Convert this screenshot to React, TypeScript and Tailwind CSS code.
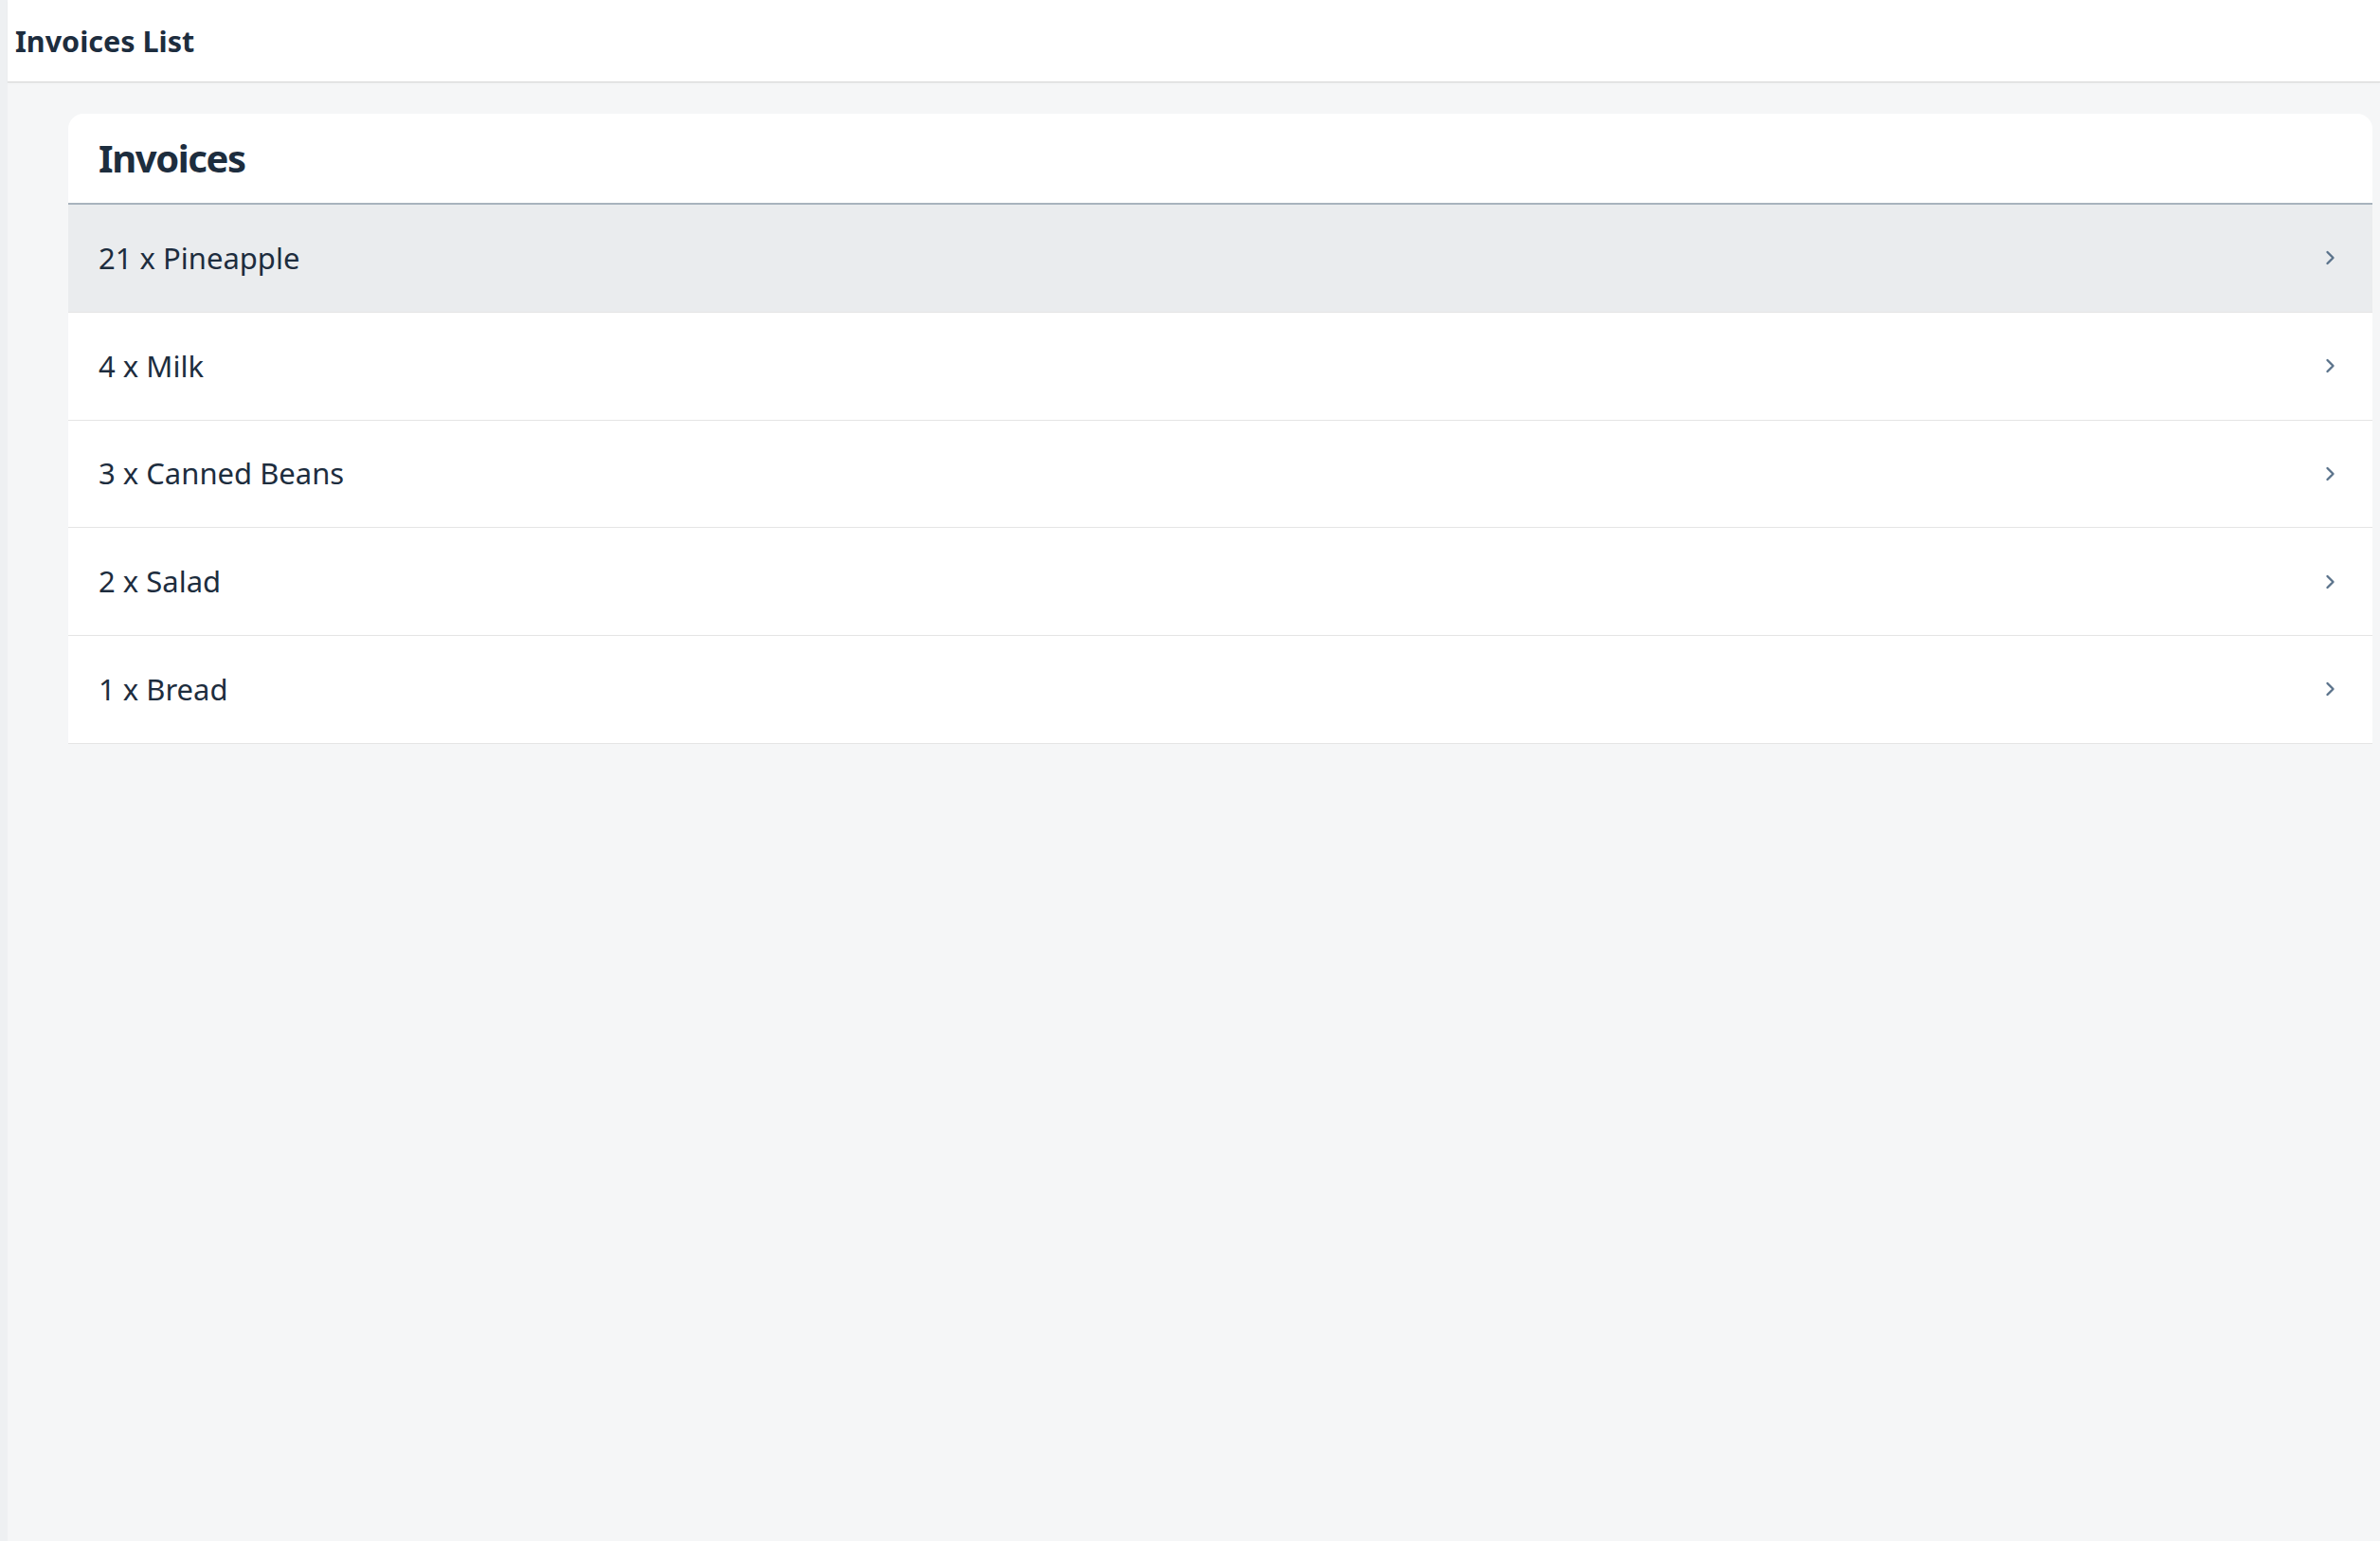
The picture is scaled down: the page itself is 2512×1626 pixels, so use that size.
const items = [
  { id: 1, qty: 21, name: "Pineapple" },
  { id: 2, qty: 4, name: "Milk" },
  { id: 3, qty: 3, name: "Canned Beans" },
  { id: 4, qty: 2, name: "Salad" },
  { id: 5, qty: 1, name: "Bread" },
];

function Chevron() {
  return (
    <svg width="11" height="16" viewBox="0 0 11 16" fill="none" className="shrink-0">
      <path d="M2.5 2 L8.5 8 L2.5 14" stroke="#5b738b" strokeWidth="2.4" strokeLinecap="round" strokeLinejoin="round" />
    </svg>
  );
}

export default function App() {
  return (
    <div className="flex min-h-[1626px] w-full bg-[#f5f6f7] text-[#1d2d3e] font-['Noto_Sans',sans-serif]">
      <div className="w-2 shrink-0 bg-[#eef0f2]"></div>
      <div className="flex flex-1 flex-col">
        <header className="flex h-[87px] items-center bg-white border-b-[1.5px] border-[#d6d6d6] pl-2 shadow-[0_1px_2px_rgba(0,0,0,0.04)]">
          <h1 className="text-[30.5px] font-bold leading-none">Invoices List</h1>
        </header>
        <main className="pt-[33px] pl-16 pr-2">
          <div className="bg-white rounded-t-2xl overflow-hidden">
            <div className="flex h-[96px] items-center px-8 border-b-2 border-[#a8b3bd]">
              <h2 className="text-[40px] font-bold leading-none tracking-[-1.4px]">Invoices</h2>
            </div>
            <ul>
              {items.map((item, i) => (
                <li
                  key={item.id}
                  className={`flex h-[113.75px] items-center justify-between pl-8 pr-[39px] border-b-[1.5px] border-[#e5e5e5] ${i === 0 ? "bg-[#eaecee]" : "bg-white"}`}
                >
                  <span className="text-[31px] leading-none">{item.qty} x {item.name}</span>
                  <Chevron />
                </li>
              ))}
            </ul>
          </div>
        </main>
      </div>
    </div>
  );
}
